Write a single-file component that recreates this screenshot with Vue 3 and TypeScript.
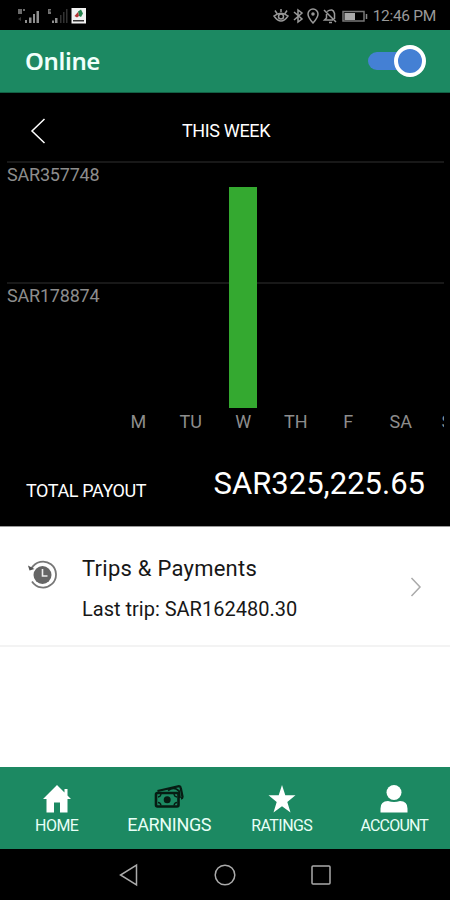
<script setup lang="ts">
interface Day {
  label: string
  value: number
}

const maxValue = 357748
const days: Day[] = [
  { label: 'M', value: 0 },
  { label: 'TU', value: 0 },
  { label: 'W', value: 325225.65 },
  { label: 'TH', value: 0 },
  { label: 'F', value: 0 },
  { label: 'SA', value: 0 },
  { label: 'S', value: 0 },
]

const barHeight = (day: Day): string => `${(day.value / maxValue) * 100}%`
</script>

<template>
  <div class="screen">
    <div class="status">
      <svg class="signals" width="74" height="18" viewBox="0 0 74 18">
        <g fill="#8f8f8f">
          <path d="M1 1h4v5H1zM6 1h2v2H6z" opacity=".75" />
          <path d="M1 11l3-2v4z" opacity=".4" />
          <path d="M8 12h2v3H8zM12 9.500h2.500V15H12zM16 6h2v9h-2zM19.500 3H22v12h-2.500z" />
          <path d="M31 1h3v1.500h-1.500v1H34V6h-3z" opacity=".8" />
          <path d="M35 12.500h2V15h-2zM38 10h2.500v5H38z" />
          <path d="M43 7h1.500v8H43zM46 4h1.500v11H46zM49 1h1.500v14H49z" opacity=".35" />
        </g>
        <path fill="#f2f2f2" d="M54.500 0h14.500v15.500H54.500z" />
        <path fill="#26834e" d="M61 3.500l3-2 2 4-2 3.500-2-1z" />
        <path fill="#b23535" d="M57.500 8l3.500-4 1 4-2 1.500z" />
        <path fill="#333" d="M56 12h11v1.500H56z" />
      </svg>
      <div class="indicators">
        <svg width="100" height="18" viewBox="0 0 100 18" fill="none" stroke="#999" stroke-width="1.500">
          <path d="M1 9Q8 3.500 15 9Q8 19 1 9zM2 3.500l2 3M8 2v3M14 3.500l-2 3" />
          <circle cx="8" cy="9.500" r="2.500" />
          <path d="M21 5l8 7-4 3V3l4 3-8 7" />
          <path d="M40 16s-5-5.500-5-9a5 5 0 0 1 10 0c0 3.500-5 9-5 9z" />
          <circle cx="40" cy="7" r="1" fill="#999" />
          <path d="M51 3l12 12M54 4.500q6-4 7.500 2V12M53.500 7v4l-2 2H60M56 15.500h3" />
          <path d="M70 4.500h21v9.500H70z" stroke="#777" />
          <path d="M71.500 6H82v7H71.500z" fill="#aaa" stroke="none" />
          <path d="M93.500 7v5" stroke="#888" />
        </svg>
        <span class="time">12:46 PM</span>
      </div>
    </div>

    <header class="header">
      <h1>Online</h1>
      <div class="toggle"><span class="knob"></span></div>
    </header>

    <main>
      <section class="earnings">
        <div class="week">
          <svg width="16" height="28" viewBox="0 0 16 28" fill="none" stroke="#fff" stroke-width="1.500">
            <path d="M14.500 2L2 14l12.500 12" />
          </svg>
          <h2>THIS WEEK</h2>
        </div>

        <div class="chart">
          <div class="scale">
            <div class="tick"><span>SAR357748</span></div>
            <div class="tick"><span>SAR178874</span></div>
          </div>
          <div class="days">
            <div v-for="(day, i) in days" :key="i" class="day">
              <div class="track"><div class="bar" :style="{ height: barHeight(day) }"></div></div>
              <span class="day-label">{{ day.label }}</span>
            </div>
          </div>
        </div>

        <div class="payout">
          <span class="payout-label">TOTAL PAYOUT</span>
          <span class="amount">SAR325,225.65</span>
        </div>
      </section>

      <section class="trips">
        <svg class="history" width="30" height="30" viewBox="0 0 30 30">
          <path d="M3.500 8.500A13 13 0 1 1 4 21.500" fill="none" stroke="#777" stroke-width="1.800" />
          <path d="M0 5.500l1.500 5 5-1.500z" fill="#555" />
          <circle cx="14.500" cy="15" r="9" fill="#666" />
          <path d="M14.500 9v7h5" fill="none" stroke="#eee" stroke-width="1.600" />
        </svg>
        <div class="trip-text">
          <p class="trip-title">Trips &amp; Payments</p>
          <p class="trip-last">Last trip: SAR162480.30</p>
        </div>
        <svg class="next" width="12" height="20" viewBox="0 0 12 20" fill="none" stroke="#aaa" stroke-width="1.500">
          <path d="M1.500 1L10 10l-8.500 9" />
        </svg>
      </section>
    </main>

    <nav class="tabs">
      <div class="tab">
        <svg width="30" height="30" viewBox="0 0 30 30" fill="#fff">
          <path d="M15 1L1 15h3.500v13.500h7.500v-10h6v10h7.500V15H29l-3.500-3.500V5h-3v3.500z" />
        </svg>
        <span>HOME</span>
      </div>
      <div class="tab active">
        <svg width="30" height="30" viewBox="0 0 30 30">
          <path d="M3.500 7L25 2.200q1.500 0 1.700 1.500l1.800 9q0 1.500-1.500 1.800" fill="none" stroke="#071c13" stroke-width="2.300" />
          <path d="M14 6.500q6-4.500 11 .5l1 7" fill="none" stroke="#071c13" stroke-width="1.800" />
          <rect x="2" y="9" width="22.500" height="13.500" rx="1.500" fill="none" stroke="#071c13" stroke-width="2.600" />
          <path d="M4 13q2.500 0 3-3M20 10q.500 3 3 3M4 18.500q2.500 0 3 3M20 21.500q.500-3 3-3" fill="none" stroke="#071c13" stroke-width="1.400" />
          <circle cx="13.200" cy="15.700" r="3.500" fill="#071c13" />
        </svg>
        <span>EARNINGS</span>
      </div>
      <div class="tab">
        <svg width="30" height="30" viewBox="0 0 30 30" fill="#fff">
          <path d="M15 1l3.300 10.300h10.200L20.300 18l3.200 10.500L15 22.200 6.500 28.500 9.700 18 1.500 11.300h10.200z" />
        </svg>
        <span>RATINGS</span>
      </div>
      <div class="tab account">
        <svg width="30" height="30" viewBox="0 0 30 30" fill="#fff">
          <circle cx="15" cy="8.500" r="7.500" />
          <path d="M1.500 28.500v-4q0-7.500 7.500-7.500 6 2 12 0 7.500 0 7.500 7.500v4z" />
        </svg>
        <span>ACCOUNT</span>
      </div>
    </nav>

    <footer class="system">
      <svg width="24" height="24" viewBox="0 0 24 24"><path d="M19.500 2v20L3.500 12z" /></svg>
      <svg width="24" height="24" viewBox="0 0 24 24"><circle cx="12" cy="12" r="9.800" /></svg>
      <svg width="24" height="24" viewBox="0 0 24 24"><rect x="3" y="3" width="18" height="18" rx="1" /></svg>
    </footer>
  </div>
</template>

<style>
body {
  margin: 0;
}
</style>

<style scoped>
.screen {
  width: 450px;
  height: 900px;
  display: flex;
  flex-direction: column;
  overflow: hidden;
  background: #fff;
  font-family: Roboto, "Liberation Sans", sans-serif;
  white-space: nowrap;
}
h1, h2, p {
  margin: 0;
  font-weight: 400;
}
.status {
  height: 30px;
  flex: none;
  box-sizing: border-box;
  display: flex;
  justify-content: space-between;
  align-items: flex-start;
  padding: 7px 14px 0 17px;
  background: #000;
}
.signals {
  margin-top: 1px;
}
.indicators {
  display: flex;
  color: #999;
}
.time {
  font-size: 15.500px;
  line-height: 19px;
  letter-spacing: -0.3px;
}
.header {
  height: 63px;
  flex: none;
  box-sizing: border-box;
  display: flex;
  align-items: center;
  justify-content: space-between;
  padding: 0 24px 0 25px;
  background: #1c8962;
  border-bottom: 1px solid #126044;
}
.header h1 {
  font-family: "Noto Sans", sans-serif;
  font-size: 24px;
  font-weight: 600;
  letter-spacing: -0.35px;
  color: #f0fffa;
  line-height: 62px;
}
.toggle {
  width: 58px;
  height: 18px;
  display: flex;
  align-items: center;
  justify-content: flex-end;
  border-radius: 9px;
  background: linear-gradient(#4480d4, #4480d4) left / 40px 18px no-repeat;
}
.knob {
  width: 24px;
  height: 24px;
  flex: none;
  border: 4px solid #fff;
  border-radius: 50%;
  background: #4480d4;
}
.earnings {
  height: 433px;
  background: #000;
  color: #fff;
}
.week {
  height: 68px;
  display: grid;
  grid-template-columns: 80px 1fr 78px;
  align-items: center;
  box-sizing: border-box;
  padding-top: 8px;
}
.week svg {
  margin-left: 30px;
}
.week h2 {
  font-size: 18px;
  line-height: 20px;
  letter-spacing: -0.35px;
  text-align: center;
}
.chart {
  height: 272px;
  margin: 0 6px 0 7px;
  display: grid;
  overflow: hidden;
  color: #8d8d8d;
}
.scale, .days {
  grid-area: 1 / 1;
}
.tick {
  height: 119px;
  border-top: 2px solid #181818;
  font-size: 18px;
  line-height: 23px;
  letter-spacing: -0.2px;
}
.days {
  display: flex;
  padding-left: 105px;
}
.day {
  flex: 0 0 52.500px;
  display: flex;
  flex-direction: column;
  align-items: center;
}
.day:last-child .day-label {
  margin-right: 13px;
}
.track {
  height: 243px;
  margin-top: 4px;
  display: flex;
  align-items: flex-end;
}
.bar {
  width: 28px;
  background: #34a930;
}
.day-label {
  font-size: 18px;
  line-height: 27px;
}
.payout {
  height: 93px;
  display: flex;
  justify-content: space-between;
  align-items: flex-start;
  box-sizing: border-box;
  padding: 30px 25px 0 26px;
}
.payout-label {
  margin-top: 17px;
  font-size: 18px;
  line-height: 22px;
  letter-spacing: -0.4px;
}
.amount {
  font-size: 31px;
  line-height: 41px;
}
.trips {
  height: 121px;
  box-sizing: border-box;
  display: flex;
  padding: 0 28px 0 28px;
  border-top: 1px solid #999;
  border-bottom: 2px solid #f3f3f3;
  color: #171717;
}
.history {
  margin-top: 33px;
}
.trip-text {
  flex: 1;
  padding: 28px 0 0 24px;
}
.trip-title {
  font-size: 22px;
  line-height: 28px;
  letter-spacing: 0.25px;
}
.trip-last {
  margin-top: 13px;
  font-size: 20px;
  line-height: 27px;
}
.next {
  margin-top: 50px;
}
.tabs {
  height: 82px;
  flex: none;
  margin-top: auto;
  display: grid;
  grid-template-columns: repeat(4, 1fr);
  background: #1c8962;
  color: #e8fff7;
}
.tab {
  display: flex;
  flex-direction: column;
  align-items: center;
  padding: 17px 0 0 1px;
  font-size: 16px;
  letter-spacing: -0.55px;
}
.tab span {
  line-height: 24px;
}
.account {
  letter-spacing: -0.8px;
}
.active {
  font-size: 18px;
  letter-spacing: -0.35px;
}
.active span {
  line-height: 22px;
}
.system {
  height: 51px;
  flex: none;
  display: flex;
  align-items: center;
  justify-content: center;
  gap: 72px;
  background: #000;
}
.system svg {
  fill: none;
  stroke: #aaa;
  stroke-width: 1.500;
}
</style>
